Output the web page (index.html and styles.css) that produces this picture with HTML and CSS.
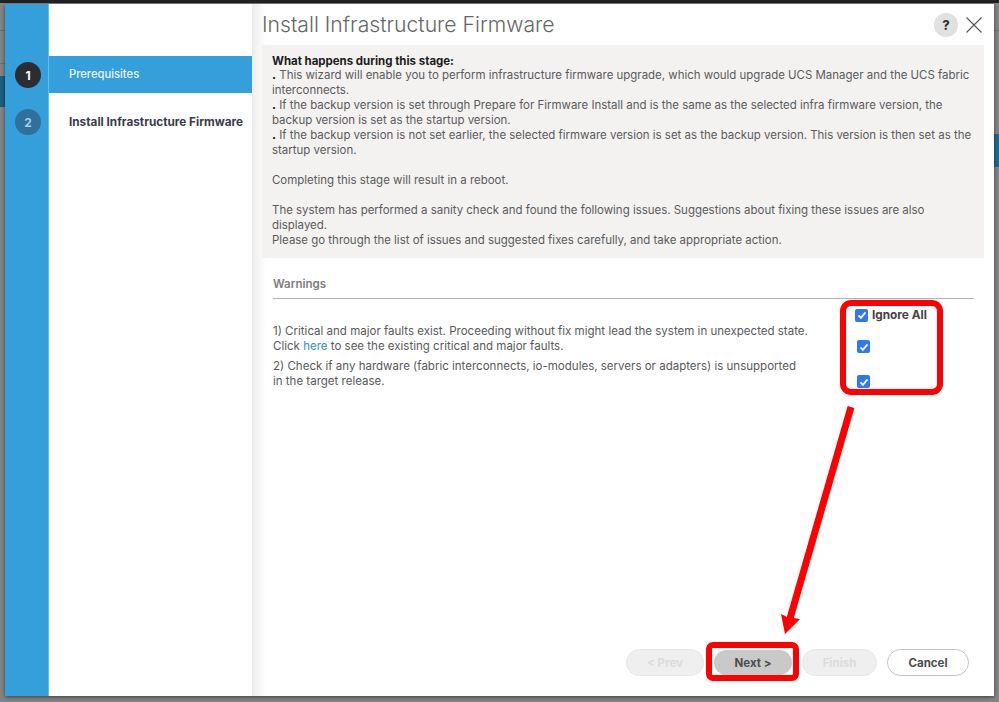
FILE: index.html
```html
<!DOCTYPE html>
<html lang="en">
<head>
<meta charset="utf-8">
<title>Install Infrastructure Firmware</title>
<link rel="stylesheet" href="styles.css">
</head>
<body>
<div class="dialog">
  <aside class="rail">
    <div class="rail-spacer"></div>
    <div class="step active"><span class="num num-active">1</span><span class="step-label">Prerequisites</span></div>
    <div class="step"><span class="num num-idle">2</span><span class="step-label">Install Infrastructure Firmware</span></div>
  </aside>
  <main class="content">
    <header class="head">
      <h1>Install Infrastructure Firmware</h1>
      <span class="help">?</span>
      <svg class="close" width="16" height="16" viewBox="0 0 16 16"><path d="M.5.5l15 15M15.5.5l-15 15" stroke="#555" stroke-width="1.1" fill="none"/></svg>
    </header>
    <section class="info">
      <p class="info-title">What happens during this stage:</p>
      <p><b>.</b> This wizard will enable you to perform infrastructure firmware upgrade, which would upgrade UCS Manager and the UCS fabric interconnects.</p>
      <p><b>.</b> If the backup version is set through Prepare for Firmware Install and is the same as the selected infra firmware version, the backup version is set as the startup version.</p>
      <p><b>.</b> If the backup version is not set earlier, the selected firmware version is set as the backup version. This version is then set as the startup version.</p>
      <p class="gap">Completing this stage will result in a reboot.</p>
      <p class="gap">The system has performed a sanity check and found the following issues. Suggestions about fixing these issues are also displayed.</p>
      <p>Please go through the list of issues and suggested fixes carefully, and take appropriate action.</p>
    </section>
    <section class="warnings">
      <h2>Warnings</h2>
      <div class="warn-grid">
        <div class="warn-text">
          <p class="w1">1) Critical and major faults exist. Proceeding without fix might lead the system in unexpected state.<br>Click <a href="#">here</a> to see the existing critical and major faults.</p>
          <p class="w2">2) Check if any hardware (fabric interconnects, io-modules, servers or adapters) is unsupported<br>in the target release.</p>
        </div>
        <div class="checks">
          <label class="check all"><span class="box"><svg viewBox="0 0 12 12" width="12" height="12"><path d="M2.5 6.3l2.4 2.5 4.6-5.4" stroke="#fff" stroke-width="1.8" fill="none"/></svg></span>Ignore All</label>
          <span class="box b2"><svg viewBox="0 0 12 12" width="12" height="12"><path d="M2.5 6.3l2.4 2.5 4.6-5.4" stroke="#fff" stroke-width="1.8" fill="none"/></svg></span>
          <span class="box b3"><svg viewBox="0 0 12 12" width="12" height="12"><path d="M2.5 6.3l2.4 2.5 4.6-5.4" stroke="#fff" stroke-width="1.8" fill="none"/></svg></span>
        </div>
      </div>
    </section>
    <footer class="actions">
      <button class="btn off prev">&lt; Prev</button>
      <button class="btn next">Next &gt;</button>
      <button class="btn off finish">Finish</button>
      <button class="btn cancel">Cancel</button>
    </footer>
  </main>
</div>
<div class="mark mark-checks"></div>
<div class="mark mark-next"></div>
<svg class="arrow" width="999" height="702" viewBox="0 0 999 702"><path d="M851 407L789 622" stroke="#fe0000" stroke-width="7" fill="none"/><path d="M785 634L781 614L789 618L793 618L800 619Z" fill="#fe0000"/></svg>
</body>
</html>
```
FILE: styles.css
```css
* { box-sizing: border-box; }
html, body { margin: 0; height: 100%; }
body {
  width: 999px; height: 702px; overflow: hidden; position: relative;
  background:
    linear-gradient(#222, #222) 0 0 / 100% 3px no-repeat,
    linear-gradient(#1c5f80, #1c5f80) 0 76px / 5px 31px no-repeat,
    linear-gradient(#1f6a8f, #1f6a8f) 994px 134px / 5px 33px no-repeat,
    linear-gradient(#6f6f6f, #6f6f6f) 0 30px / 100% 1px no-repeat,
    linear-gradient(#6f6f6f, #6f6f6f) 0 63px / 5px 1px no-repeat,
    #858585;
  font-family: Inter, "Liberation Sans", sans-serif;
  padding: 4px 5px 6px 5px;
}
p, h1, h2 { margin: 0; font-weight: normal; }
.dialog { display: flex; width: 989px; height: 692px; background: #fff; box-shadow: 0 1px 4px rgba(0,0,0,.55); }
.rail {
  width: 247px; flex: none;
  background: linear-gradient(90deg, #349fdb 0 43px, #5cc0f5 43px 44px, #fff 44px);
  display: flex; flex-direction: column;
}
.rail-spacer { height: 52px; }
.step { height: 37px; display: flex; align-items: center; position: relative; font-size: 11.75px; padding-left: 64px; color: #3b3b4c; font-weight: 700; white-space: nowrap; }
.step.active { background: linear-gradient(90deg, transparent 44px, #349fdb 44px); color: #e8f4fb; font-size: 11.2px; font-weight: 500; padding-bottom: 1px; }
.step + .step { margin-top: 10px; height: 37px; }
.num {
  position: absolute; left: 10px; top: 6px; width: 26px; height: 26px; border-radius: 50%;
  display: flex; align-items: center; justify-content: center; font-size: 12px; font-weight: 700;
}
.num-active { background: #2c2d33; color: #fff; }
.num-idle { background: #31709a; color: #9fd0ee; }
.content {
  flex: 1; min-width: 0; display: flex; flex-direction: column;
  padding: 0 10px; position: relative;
  background: linear-gradient(90deg, #ececec, #fff 14px) 0 0 / 14px 100% no-repeat, #fff;
}
.head { height: 41px; display: flex; align-items: center; }
h1 { font-size: 21.15px; color: #666668; font-weight: 300; flex: 1; white-space: nowrap; }
.help {
  width: 24px; height: 24px; border-radius: 50%; background: #e1e1e1; color: #333;
  display: flex; align-items: center; justify-content: center; font-weight: 800; font-size: 13px; margin-right: 8px; margin-top: 1px;
}
.close { margin-right: 2px; flex: none; }
.info {
  background: #f3f2f1; height: 213px; padding: 9px 10px 0 10px;
  font-size: 11.46px; line-height: 15px; color: #5a5a5c; width: 722px;
}
.info b { color: #111; font-weight: 800; }
.info-title { color: #1b1b1b; font-weight: 700; line-height: 14px; }
.gap { margin-top: 15px; }
.warnings { padding: 18px 10px 0 11px; width: 722px; }
h2 { font-size: 11.5px; font-weight: 600; color: #7d7d7d; height: 23px; border-bottom: 1px solid #b5b5b5; line-height: 17px; }
.warn-grid { display: flex; }
.warn-text { width: 578px; font-size: 11.52px; line-height: 15px; color: #5a5a5c; padding-top: 25px; white-space: nowrap; }
.w2 { margin-top: 5px; }
a { color: #3a8fc0; text-decoration: none; }
.checks { position: relative; flex: 1; }
.check { position: absolute; left: 4px; top: 9px; display: flex; align-items: center; gap: 4px; font-size: 11.8px; font-weight: 700; color: #444; white-space: nowrap; }
.box { width: 13px; height: 13px; border-radius: 2px; background: #2f78f0; display: flex; align-items: center; justify-content: center; flex: none; }
.b2, .b3 { position: absolute; left: 6px; }
.b2 { top: 41px; }
.b3 { top: 76px; }
.actions { position: absolute; left: 374px; top: 645px; height: 27px; display: flex; align-items: center; gap: 7px; }
.btn {
  height: 27px; border-radius: 14px; border: 0; font: 700 11.5px Inter, "Liberation Sans", sans-serif;
  padding: 0; text-align: center;
}
.off { background: #efefef; color: #dcdcdc; border: 1px solid #e6e6e6; }
.prev { width: 78px; }
.next { width: 78px; height: 25px; background: #c9c9c9; color: #4c4c4e; margin: 0 3px; }
.finish { width: 75px; }
.cancel { width: 82px; background: #fff; color: #4c4c4e; border: 1px solid #c4c4c4; margin-left: 3px; }
.mark { position: absolute; border: 6px solid #fe0000; }
.mark-checks { left: 840px; top: 300px; width: 103px; height: 95px; border-radius: 11px; }
.mark-next { left: 706px; top: 642px; width: 93px; height: 39px; border-radius: 7px; }
.arrow { position: absolute; left: 0; top: 0; pointer-events: none; }
```
